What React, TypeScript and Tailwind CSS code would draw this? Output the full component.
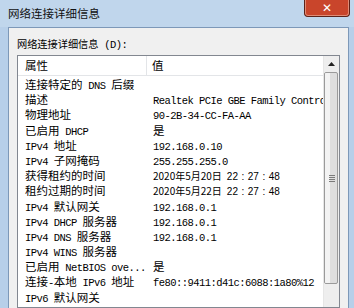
import React from "react";

const CJK = /([\u3000-\u9fff\uff00-\uffef]+)/;

function Mixed({ text, big = true }: { text: string; big?: boolean }) {
  const parts = text.split(CJK).filter((p) => p.length > 0);
  return (
    <>
      {parts.map((p, i) =>
        CJK.test(p) ? (
          <span
            key={i}
            className={
              big
                ? "font-['Noto_Sans_CJK_SC',sans-serif] text-[11.5px]"
                : "font-['Noto_Sans_CJK_SC',sans-serif] text-[10.2px]"
            }
          >
            {p}
          </span>
        ) : (
          <span
            key={i}
            className="font-['Liberation_Mono','DejaVu_Sans_Mono',monospace] text-[10.5px] tracking-[-0.55px] whitespace-pre"
          >
            {p}
          </span>
        )
      )}
    </>
  );
}

function DateText({ d, t }: { d: string; t: string[] }) {
  return (
    <>
      <span className="font-['Noto_Sans_CJK_SC',sans-serif] text-[10px]">{d}</span>
      <span className="ml-[5px] font-['Liberation_Sans',sans-serif] text-[10px]">
        {t[0]}
        <span className="mx-[3.5px]">:</span>
        {t[1]}
        <span className="mx-[3.5px]">:</span>
        {t[2]}
      </span>
    </>
  );
}

const rows: [string, React.ReactNode][] = [
  ["连接特定的 DNS 后缀", ""],
  ["描述", <Mixed text="Realtek PCIe GBE Family Controller" />],
  ["物理地址", <Mixed text="90-2B-34-CC-FA-AA" />],
  ["已启用 DHCP", <Mixed text="是" />],
  ["IPv4 地址", <Mixed text="192.168.0.10" />],
  ["IPv4 子网掩码", <Mixed text="255.255.255.0" />],
  ["获得租约的时间", <DateText d="2020年5月20日" t={["22", "27", "48"]} />],
  ["租约过期的时间", <DateText d="2020年5月22日" t={["22", "27", "48"]} />],
  ["IPv4 默认网关", <Mixed text="192.168.0.1" />],
  ["IPv4 DHCP 服务器", <Mixed text="192.168.0.1" />],
  ["IPv4 DNS 服务器", <Mixed text="192.168.0.1" />],
  ["IPv4 WINS 服务器", ""],
  ["已启用 NetBIOS ove...", <Mixed text="是" />],
  ["连接-本地 IPv6 地址", <Mixed text="fe80::9411:d41c:6088:1a80%12" />],
  ["IPv6 默认网关", ""],
  ["IPv6 DNS 服务器", ""],
];

export default function App() {
  return (
    <div className="w-[354px] h-[308px] overflow-hidden flex flex-col bg-[#b7cfe9] text-black">
      {/* Title bar */}
      <div className="h-[27px] shrink-0 flex items-start bg-[#c0d6ec]">
        <div className="flex-1 pl-[8px] pt-[5px] leading-[16px] font-['Noto_Sans_CJK_SC',sans-serif] text-[11.5px] text-[#111]">
          网络连接详细信息
        </div>
        <div className="mr-[4px] w-[46px] h-[17px] shrink-0 flex rounded-b-[4px] border border-t-0 border-[#5c2219] bg-[#c9452b] overflow-hidden">
          <div className="flex-1 grid place-items-center rounded-b-[3px] border border-t-0 border-[#e08c76]">
            <span className="text-white text-[12px] leading-none font-bold font-['DejaVu_Sans',sans-serif]">✕</span>
          </div>
        </div>
      </div>

      {/* Client area */}
      <div className="flex-1 min-h-0 ml-[8px] mr-[5px] bg-[#f0f0f0] border-l border-t border-r border-[#7d98b8] pl-[8px] pr-[8px] pt-[7px] flex flex-col">
        <div className="h-[14px] leading-[14px] whitespace-nowrap">
          <Mixed text="网络连接详细信息 (D):" big={false} />
        </div>

        {/* List view */}
        <div className="mt-[6px] flex-1 min-h-0 bg-white border border-[#828790] flex overflow-hidden">
          <div className="flex-1 min-w-0 flex flex-col overflow-hidden">
            <div className="h-[20px] shrink-0 flex bg-white border-b border-[#e3e5e8]">
              <div className="w-[129px] shrink-0 pl-[7px] flex items-center border-r border-[#e3e5e8]">
                <span className="font-['Noto_Sans_CJK_SC',sans-serif] text-[11.5px] leading-none">属性</span>
              </div>
              <div className="flex-1 pl-[5px] flex items-center">
                <span className="font-['Noto_Sans_CJK_SC',sans-serif] text-[11.5px] leading-none">值</span>
              </div>
            </div>
            <div className="flex flex-col">
              {rows.map(([name, value], i) => (
                <div key={i} className="h-[15.2px] shrink-0 flex whitespace-nowrap leading-[15.2px]">
                  <div className="w-[130px] shrink-0 pl-[7px] overflow-hidden h-[15.2px]">
                    <Mixed text={name} />
                  </div>
                  <div className="flex-1 min-w-0 pl-[5px] overflow-hidden h-[15.2px]">{value}</div>
                </div>
              ))}
            </div>
          </div>

          <div className="w-[16px] shrink-0 flex flex-col bg-[#eeeeee] border-l border-[#e6e6e6]">
            <div className="h-[16px] shrink-0 flex items-center justify-center">
              <svg width="7" height="4" viewBox="0 0 7 4">
                <path d="M0 4 L3.5 0 L7 4 Z" fill="#222" />
              </svg>
            </div>
            <div className="h-[212px] shrink-0 mr-[1px] rounded-[2px] border border-[#9a9a9a] bg-[#dedede] flex">
              <div className="w-[5px] bg-[#f3f3f3] rounded-l-[1px]" />
              <div className="flex-1 flex items-center justify-center">
                <div className="flex flex-col gap-[1px] -ml-[3px]">
                  <div className="w-[6px] h-[1px] bg-[#7a7a7a]" />
                  <div className="w-[6px] h-[1px] bg-[#7a7a7a]" />
                  <div className="w-[6px] h-[1px] bg-[#7a7a7a]" />
                  <div className="w-[6px] h-[1px] bg-[#7a7a7a]" />
                </div>
              </div>
            </div>
            <div className="h-[18px] shrink-0" />
            <div className="h-[16px] shrink-0 flex items-center justify-center">
              <svg width="7" height="4" viewBox="0 0 7 4">
                <path d="M0 0 L7 0 L3.5 4 Z" fill="#222" />
              </svg>
            </div>
          </div>
        </div>
      </div>
    </div>
  );
}
